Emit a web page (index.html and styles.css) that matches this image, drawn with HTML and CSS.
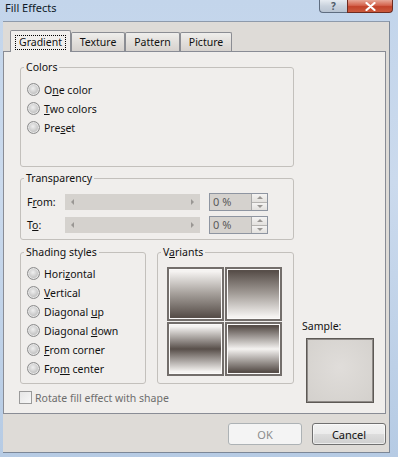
FILE: index.html
```html
<!DOCTYPE html>
<html lang="en">
<head>
  <meta charset="UTF-8">
  <title>Fill Effects</title>
  <link rel="stylesheet" href="styles.css">
</head>
<body>
  <div class="window">
    <div class="titlebar">
      <span class="title">Fill Effects</span>
      <div class="caption">
        <span class="cap-btn help">?</span>
        <span class="cap-btn close">
          <svg width="11" height="9" viewBox="0 0 11 9"><path d="M1.5 1 L9.5 8 M9.5 1 L1.5 8" stroke="#fff" stroke-width="2.2" stroke-linecap="round"/></svg>
        </span>
      </div>
    </div>

    <div class="client">
      <ul class="tabs">
        <li class="tab tab-gradient active"><span class="focus">Gradient</span></li>
        <li class="tab tab-texture">Texture</li>
        <li class="tab tab-pattern">Pattern</li>
        <li class="tab tab-picture">Picture</li>
      </ul>

      <div class="panel">
        <fieldset class="group colors">
          <legend>Colors</legend>
          <label class="radio"><span class="dot"></span><span>O<u>n</u>e color</span></label>
          <label class="radio"><span class="dot"></span><span><u>T</u>wo colors</span></label>
          <label class="radio"><span class="dot"></span><span>Pre<u>s</u>et</span></label>
        </fieldset>

        <fieldset class="group transparency">
          <legend>Transparency</legend>
          <div class="trow">
            <span class="tlabel">F<u>r</u>om:</span>
            <div class="track"><span class="arr arr-left"></span><span class="arr arr-right"></span></div>
            <div class="spin">
              <span class="spin-val">0 %</span>
              <span class="spin-btns"><span class="sb"><i class="up"></i></span><span class="sb"><i class="down"></i></span></span>
            </div>
          </div>
          <div class="trow">
            <span class="tlabel">T<u>o</u>:</span>
            <div class="track"><span class="arr arr-left"></span><span class="arr arr-right"></span></div>
            <div class="spin">
              <span class="spin-val">0 %</span>
              <span class="spin-btns"><span class="sb"><i class="up"></i></span><span class="sb"><i class="down"></i></span></span>
            </div>
          </div>
        </fieldset>

        <fieldset class="group shading">
          <legend>Shading styles</legend>
          <label class="radio"><span class="dot"></span><span>Hori<u>z</u>ontal</span></label>
          <label class="radio"><span class="dot"></span><span><u>V</u>ertical</span></label>
          <label class="radio"><span class="dot"></span><span>Diagonal <u>u</u>p</span></label>
          <label class="radio"><span class="dot"></span><span>Diagonal <u>d</u>own</span></label>
          <label class="radio"><span class="dot"></span><span><u>F</u>rom corner</span></label>
          <label class="radio"><span class="dot"></span><span>Fro<u>m</u> center</span></label>
        </fieldset>

        <fieldset class="group variants">
          <legend>V<u>a</u>riants</legend>
          <div class="swatches">
            <span class="sw sw-down"></span>
            <span class="sw sw-up"></span>
            <span class="sw sw-mid"></span>
            <span class="sw sw-edge"></span>
          </div>
        </fieldset>

        <div class="sample">
          <span class="sample-label">Sample:</span>
          <div class="sample-box"></div>
        </div>

        <label class="check"><span class="box"></span><span>Rotate fill effect with shape</span></label>
      </div>

      <div class="buttons">
        <button class="btn" disabled>OK</button>
        <button class="btn">Cancel</button>
      </div>
    </div>
  </div>
</body>
</html>
```

FILE: styles.css
```css
/* Reset */
* {
  margin: 0;
  padding: 0;
  box-sizing: border-box;
}

body {
  width: 398px;
  height: 457px;
  overflow: hidden;
  font-family: "Noto Sans", sans-serif;
  font-size: 10.5px;
  color: #1b1b1b;
}

u {
  text-decoration: underline;
  text-underline-offset: 1px;
}

.window {
  height: 457px;
  display: flex;
  flex-direction: column;
  background: linear-gradient(to bottom, #c3d5eb, #cbdaed 40%, #b6cbe4);
}

/* Title bar */
.titlebar {
  height: 21px;
  display: flex;
  justify-content: space-between;
  align-items: flex-start;
  padding-left: 5px;
}

.title {
  font-size: 11px;
  line-height: 16px;
  color: #0f1a28;
}

.caption {
  display: flex;
  margin-right: 5px;
}

.cap-btn {
  height: 13px;
  display: flex;
  align-items: center;
  justify-content: center;
  border: 1px solid #5f6d80;
  border-top: none;
}

.help {
  width: 28px;
  border-right: none;
  border-radius: 0 0 0 4px;
  background: linear-gradient(to bottom, #e6ebf1, #c9d2dd 50%, #b9c4d2);
  font-weight: bold;
  font-size: 10px;
  line-height: 12px;
  color: #4e5967;
}

.close {
  width: 46px;
  border-color: #6e2b20;
  border-radius: 0 0 4px 0;
  background: linear-gradient(to bottom, #e7a898, #d4644e 45%, #c2432b 55%, #cc5a3e);
}

/* Client area */
.client {
  flex: 1;
  margin: 0 8px 4px 3px;
  padding: 8px 3px 0 0;
  background: #dedbd7;
  border-top: 1px solid #8e9aab;
  border-right: 1px solid #7c8797;
  border-bottom: 1px solid #7c8797;
}

.tabs {
  display: flex;
  align-items: flex-end;
  height: 21px;
  padding-left: 7px;
  list-style: none;
}

.tab {
  height: 19px;
  border: 1px solid #8b8d93;
  border-bottom: none;
  border-radius: 2px 2px 0 0;
  background: linear-gradient(to bottom, #efeeec, #e2dfdb 50%, #d6d2ce);
  text-align: center;
  line-height: 18px;
  color: #111;
}

.tab-gradient { width: 61px; }
.tab-texture { width: 54px; }
.tab-pattern { width: 55px; }
.tab-picture { width: 52px; }

.tab.active {
  height: 22px;
  margin-bottom: -1px;
  position: relative;
  z-index: 1;
  background: #f0eeec;
  padding-top: 4px;
}

.focus {
  display: block;
  margin: 0 4px;
  height: 15px;
  line-height: 13px;
  border: 1px dotted #000;
}

/* Tab page */
.panel {
  width: 383px;
  height: 363px;
  border: 1px solid #898c95;
  background: #f0eeec;
  padding: 8px 0 0 16px;
  display: grid;
  grid-template-columns: 126px 137px 1fr;
  grid-template-rows: 111px 74px 146px 16px;
  column-gap: 11px;
  align-items: start;
}

.group {
  border: 1px solid #c3c0bc;
  border-radius: 3px;
  padding: 0 0 0 6px;
  min-width: 0;
}

.group legend {
  line-height: 14px;
  padding: 0 2px;
  margin-left: -3px;
  color: #111;
}

.colors {
  grid-column: 1 / 3;
  grid-row: 1;
  height: 107px;
  padding-top: 6px;
}

.transparency {
  grid-column: 1 / 3;
  grid-row: 2;
  height: 69px;
  padding-top: 8px;
}

.shading {
  grid-column: 1;
  grid-row: 3;
  height: 139px;
  padding-top: 5px;
}

.variants {
  grid-column: 2;
  grid-row: 3;
  height: 139px;
  padding: 8px 0 0 9px;
}

.variants legend {
  margin-left: -6px;
}

.radio {
  display: flex;
  align-items: center;
  gap: 4px;
  height: 19px;
  color: #111;
  white-space: nowrap;
}

.dot {
  flex: none;
  width: 13px;
  height: 13px;
  border-radius: 50%;
  border: 1px solid #8c8c8c;
  background: radial-gradient(circle at 45% 40%, #efefef 0%, #cfcfcf 45%, #a8a8a8 100%);
  box-shadow: inset 0 0 0 1px #e6e6e6;
}

/* Transparency rows */
.trow {
  display: flex;
  align-items: center;
  height: 18px;
  margin-bottom: 5px;
}

.tlabel {
  width: 38px;
  color: #111;
}

.track {
  width: 135px;
  height: 16px;
  background: #d5d2ce;
  display: flex;
  justify-content: space-between;
  align-items: center;
  padding: 0 6px;
}

.arr {
  width: 0;
  height: 0;
  border-top: 3px solid transparent;
  border-bottom: 3px solid transparent;
}

.arr-left { border-right: 3px solid #9a9794; }
.arr-right { border-left: 3px solid #9a9794; }

.spin {
  margin-left: 9px;
  width: 59px;
  height: 18px;
  border: 1px solid #8e95a1;
  background: #d5d2ce;
  display: flex;
}

.spin-val {
  flex: 1;
  padding-left: 3px;
  line-height: 16px;
  font-size: 11px;
  color: #5a5a5a;
}

.spin-btns {
  width: 16px;
  display: flex;
  flex-direction: column;
  border-left: 1px solid #a9a9a9;
}

.sb {
  flex: 1;
  display: flex;
  align-items: center;
  justify-content: center;
  background: linear-gradient(to bottom, #f4f3f2, #e3e1de);
  border-bottom: 1px solid #b5b3b0;
}

.sb:last-child { border-bottom: none; }

.up, .down {
  width: 0;
  height: 0;
  border-left: 3px solid transparent;
  border-right: 3px solid transparent;
}

.up { border-bottom: 3px solid #9a9794; }
.down { border-top: 3px solid #9a9794; }

/* Variants */
.swatches {
  display: grid;
  grid-template-columns: 57px 57px;
  grid-template-rows: 54px 54px;
  gap: 1px;
}

.sw {
  border: 2px solid #736e6b;
  box-shadow: inset 0 0 0 1px #fbfaf9;
}

.sw-down { background: linear-gradient(to bottom, #f5f3f1 5%, #a49e99 50%, #584f4a 95%); }
.sw-up { background: linear-gradient(to bottom, #584f4a 5%, #a49e99 50%, #f5f3f1 95%); }
.sw-mid { background: linear-gradient(to bottom, #f5f3f1 5%, #584f4a 50%, #f5f3f1 95%); }
.sw-edge { background: linear-gradient(to bottom, #584f4a 5%, #f5f3f1 50%, #584f4a 95%); }

/* Sample */
.sample {
  grid-column: 3;
  grid-row: 3 / 5;
  align-self: end;
  margin-left: -3px;
  margin-bottom: 4px;
}

.sample-label {
  display: block;
  line-height: 14px;
  color: #111;
}

.sample-box {
  margin: 5px 0 0 4px;
  width: 68px;
  height: 65px;
  border: 1px solid #5d5955;
  box-shadow: inset 0 0 0 1px #8f8b88;
  background: radial-gradient(circle at 50% 45%, #e0ddda, #d3d0cc);
}

/* Checkbox */
.check {
  grid-column: 1 / 3;
  grid-row: 4;
  display: flex;
  align-items: center;
  gap: 3px;
  height: 13px;
  margin-left: -1px;
  color: #6d6d6d;
}

.box {
  flex: none;
  width: 13px;
  height: 13px;
  border: 1px solid #9a9a9a;
  background: linear-gradient(135deg, #e6e6e6, #f7f7f7);
}

/* Dialog buttons */
.buttons {
  display: flex;
  justify-content: flex-end;
  gap: 10px;
  margin-top: 9px;
}

.btn {
  width: 74px;
  height: 22px;
  font-family: inherit;
  font-size: 11px;
  color: #111;
  border: 1px solid #707070;
  border-radius: 3px;
  background: linear-gradient(to bottom, #f2f2f2 0%, #ebebeb 50%, #dddddd 50%, #cfcfcf 100%);
  box-shadow: inset 0 0 0 1px rgba(255, 255, 255, 0.6);
}

.btn:disabled {
  border-color: #adb2b5;
  background: #f4f4f4;
  color: #8c8c8c;
  box-shadow: none;
}
```
